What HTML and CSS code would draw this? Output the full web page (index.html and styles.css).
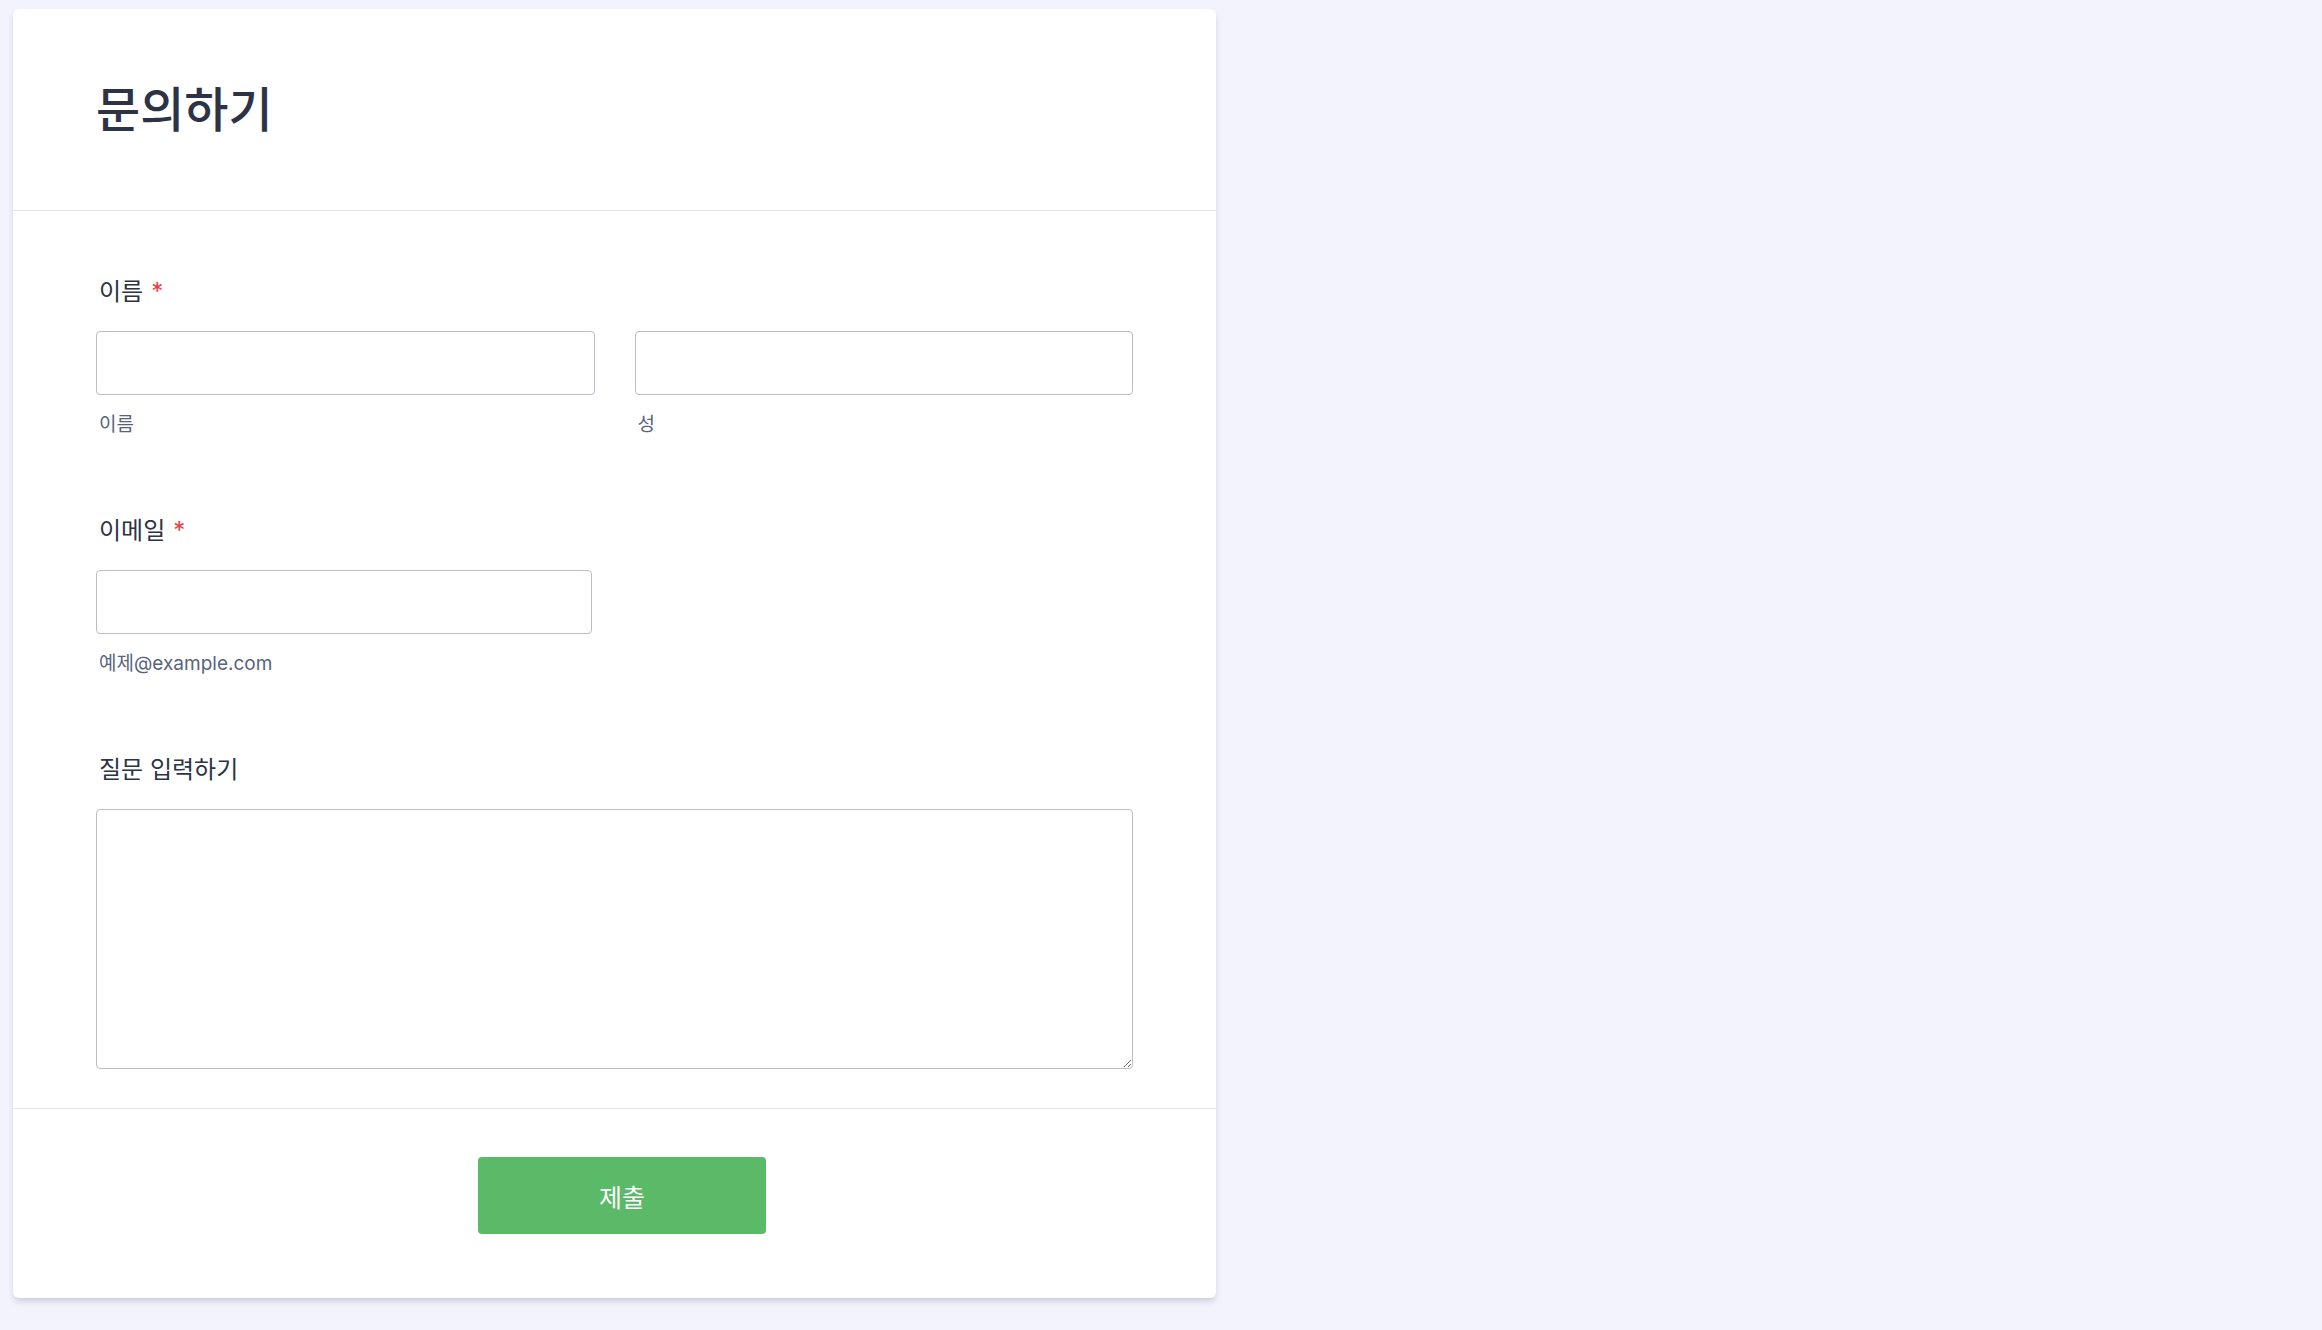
FILE: index.html
```html
<!DOCTYPE html>
<html lang="ko">
  <head>
    <meta charset="utf-8" />
    <title>문의하기</title>
    <link rel="stylesheet" href="styles.css">
  </head>
  <body>
    <form class="form-card">
      <header class="form-header">
        <h1>문의하기</h1>
      </header>

      <section class="form-body">
        <div class="field">
          <label class="field-label">이름<span class="required">*</span></label>
          <div class="field-row">
            <div class="sub-field">
              <input type="text" class="text-input" />
              <span class="sub-label">이름</span>
            </div>
            <div class="sub-field">
              <input type="text" class="text-input" />
              <span class="sub-label">성</span>
            </div>
          </div>
        </div>

        <div class="field">
          <label class="field-label">이메일<span class="required">*</span></label>
          <div class="field-row">
            <div class="sub-field single">
              <input type="email" class="text-input" />
              <span class="sub-label">예제@example.com</span>
            </div>
          </div>
        </div>

        <div class="field">
          <label class="field-label">질문 입력하기</label>
          <textarea class="text-area"></textarea>
        </div>
      </section>

      <footer class="form-footer">
        <button type="button" class="submit-button">제출</button>
      </footer>
    </form>
  </body>
</html>
```

FILE: styles.css
```css
html {
  height: 100%;
}

body {
  margin: 0;
  padding: 9px 0 0 13px;
  min-height: 100vh;
  box-sizing: border-box;
  background: #f3f3fe;
  font-family: "Inter", "Noto Sans CJK KR", sans-serif;
  color: #2c3345;
}

.form-card {
  width: 1203px;
  background: #fff;
  border-radius: 6px;
  box-shadow: 0 4px 6px -1px rgba(87, 100, 126, 0.28);
}

.form-header {
  height: 201px;
  display: flex;
  align-items: center;
  padding: 0 83px;
  border-bottom: 1px solid #e3e5f0;
}

.form-header h1 {
  margin: 0;
  font-size: 48px;
  font-weight: 500;
  line-height: 1.2;
  color: #2c3345;
}

.form-body {
  padding: 66px 83px 39px;
  border-bottom: 1px solid #e3e5f0;
}

.field + .field {
  margin-top: 80px;
}

.field-label {
  display: block;
  margin-left: 3px;
  margin-bottom: 24px;
  font-size: 24px;
  font-weight: 400;
  line-height: 30px;
}

.required {
  color: #f23a3c;
  margin-left: 8px;
}

.field-row {
  display: flex;
  gap: 40px;
}

.sub-field {
  flex: 1;
  display: flex;
  flex-direction: column;
}

.sub-field.single {
  flex: 0 0 496px;
}

.text-input {
  height: 64px;
  box-sizing: border-box;
  border: 1px solid #b8bdc9;
  border-radius: 4px;
  background: #fff;
  font: inherit;
  padding: 0 14px;
}

.sub-label {
  margin-top: 19px;
  margin-left: 3px;
  font-size: 19px;
  line-height: 22px;
  color: #57647e;
}

.text-area {
  display: block;
  width: 100%;
  height: 260px;
  box-sizing: border-box;
  border: 1px solid #b8bdc9;
  border-radius: 4px;
  font: inherit;
  padding: 12px 14px;
}

.form-footer {
  display: flex;
  justify-content: center;
  padding: 48px 0 64px 15px;
}

.submit-button {
  width: 288px;
  height: 77px;
  border: none;
  border-radius: 4px;
  background: #5aba68;
  color: #fff;
  font-family: inherit;
  font-size: 25px;
  font-weight: 400;
}
```
